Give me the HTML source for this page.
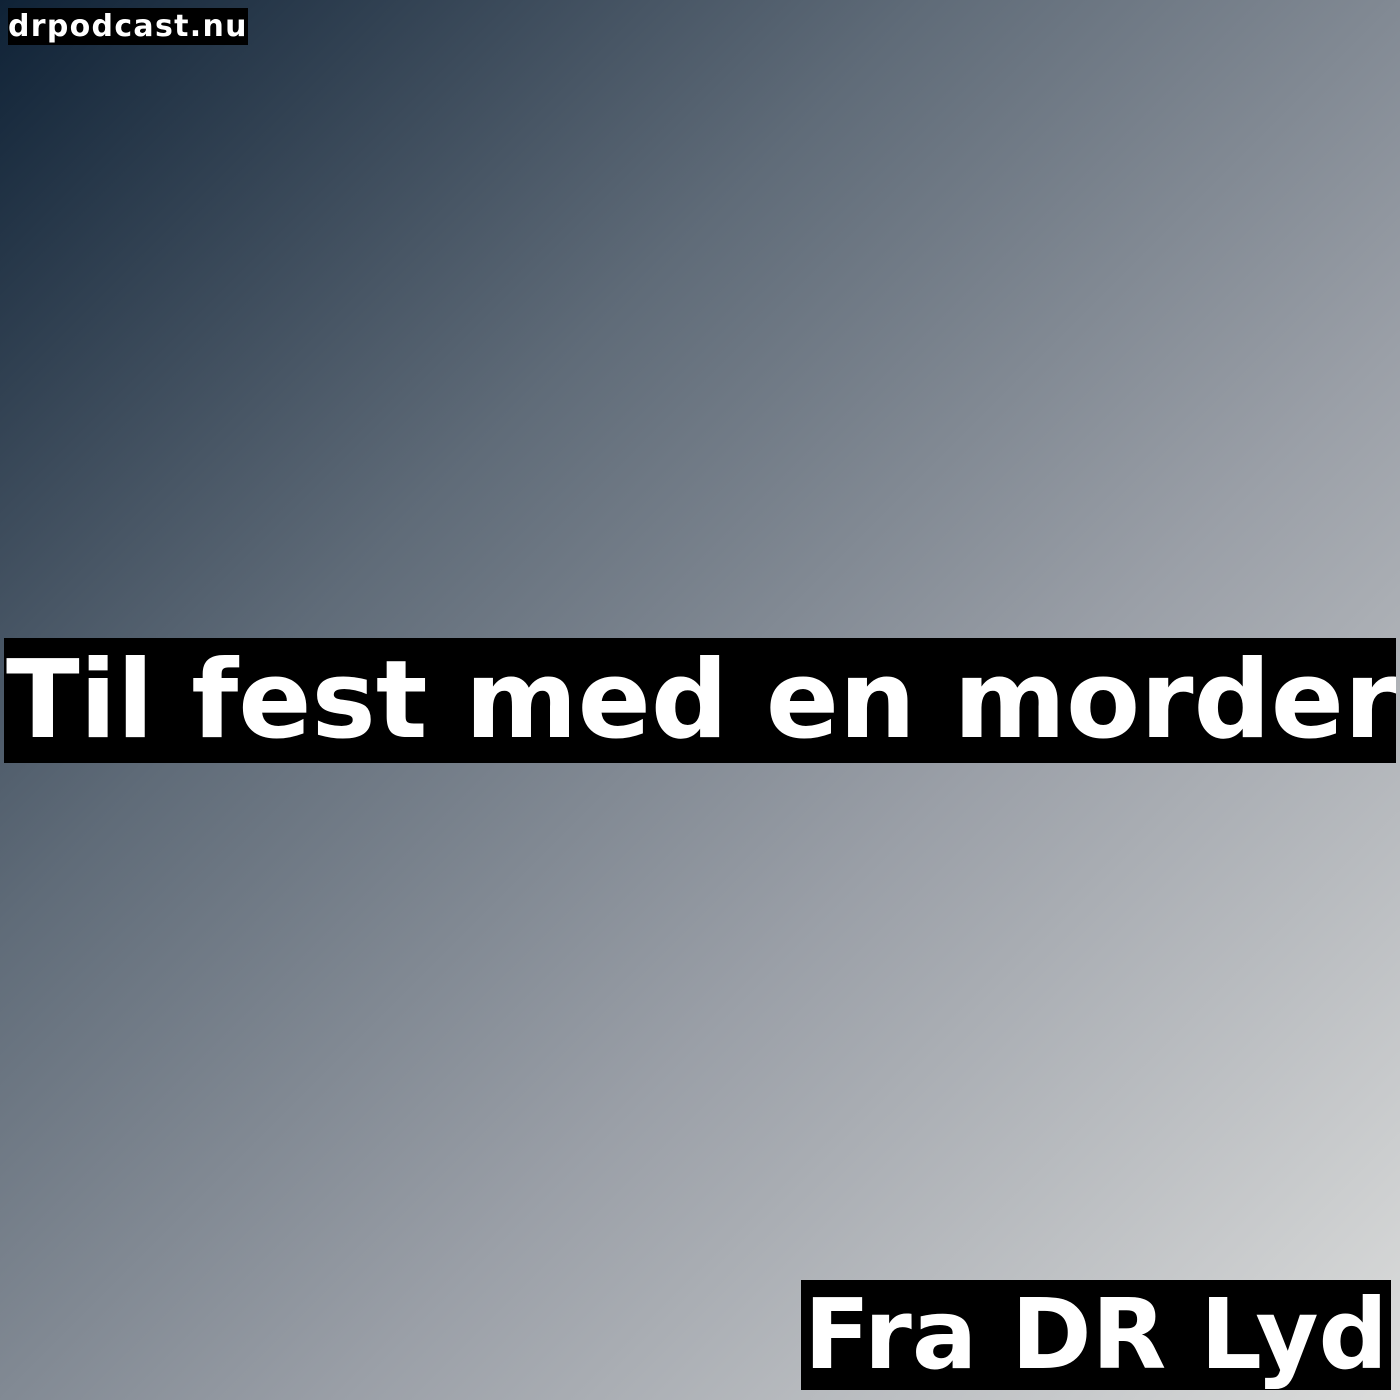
<!DOCTYPE html>
<html><head><meta charset="utf-8"><style>
html,body{margin:0;padding:0}
body{width:1400px;height:1400px;position:relative;overflow:hidden;background:linear-gradient(135deg,#0f2236 0%,#5f6b78 33%,#9a9fa7 62%,#dcdddc 100%);font-family:"DejaVu Sans","Liberation Sans",sans-serif;font-weight:bold;color:#fff}
.b{position:absolute;background:#000;white-space:nowrap;box-sizing:border-box}
</style></head><body>
<div class="b" style="left:8px;top:8px;width:240px;height:37px;font-size:30px;line-height:38px;padding-left:0px;letter-spacing:1.3px">drpodcast.nu</div>
<div class="b" style="left:4px;top:638px;width:1392px;height:125px;font-size:108px;line-height:125px;padding-left:2px;overflow:hidden">Til fest med en morder</div>
<div class="b" style="left:801px;top:1280px;width:590px;height:110px;font-size:97px;line-height:110px;padding-left:3px;overflow:hidden">Fra DR Lyd</div>
</body></html>
